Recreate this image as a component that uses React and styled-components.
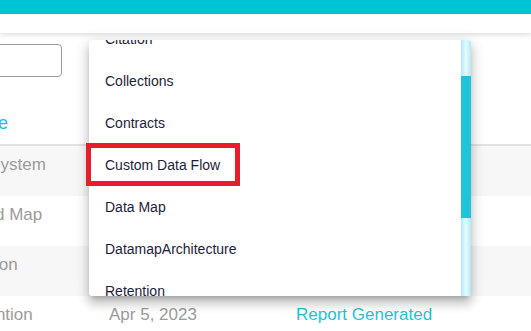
import React from "react";
import styled, { createGlobalStyle } from "styled-components";

const GlobalStyle = createGlobalStyle`
  html, body {
    margin: 0;
    padding: 0;
    background: #ffffff;
    overflow: hidden;
  }
  body {
    font-family: "Liberation Sans", Arial, sans-serif;
  }
`;

const menuItems = [
  "Citation",
  "Collections",
  "Contracts",
  "Custom Data Flow",
  "Data Map",
  "DatamapArchitecture",
  "Retention",
  "Vendors",
];

const rows = [
  { name: "HR System", date: "", status: "" },
  { name: "Cloud Map", date: "", status: "" },
  { name: "Citation", date: "", status: "" },
  { name: "Retention", date: "Apr 5, 2023", status: "Report Generated" },
];

export default function App() {
  return (
    <Page>
      <GlobalStyle />
      <TopBar />
      <Header />
      <Content>
        <Toolbar>
          <SearchInput />
        </Toolbar>
        <HeadRow>
          <HeadCell>Name</HeadCell>
          <HeadCell />
          <HeadCell />
        </HeadRow>
        {rows.map((r, i) => (
          <Row key={i} $striped={i % 2 === 0}>
            <Cell>{r.name}</Cell>
            <Cell>{r.date}</Cell>
            <Cell $link>{r.status}</Cell>
          </Row>
        ))}
      </Content>

      <Menu>
        <MenuList>
          {menuItems.map((m) => (
            <MenuItem key={m}>{m}</MenuItem>
          ))}
        </MenuList>
        <ScrollTrack>
          <ScrollThumb />
        </ScrollTrack>
      </Menu>

      <Highlight />
    </Page>
  );
}

const Page = styled.div`
  position: relative;
  width: 531px;
  height: 331px;
  overflow: hidden;
  background: #ffffff;
`;

const TopBar = styled.div`
  height: 14px;
  background-color: #00c4d6;
`;

const Header = styled.div`
  position: relative;
  z-index: 1;
  height: 19px;
  background-color: #ffffff;
  box-shadow: 0 2px 5px rgba(0, 0, 0, 0.13);
`;

const Content = styled.div`
  margin-left: -40px;
  width: 571px;
`;

const Toolbar = styled.div`
  display: flex;
  align-items: center;
  padding-top: 11px;
`;

const SearchInput = styled.div`
  width: 100px;
  height: 31px;
  border: 1px solid #9a9a9a;
  border-radius: 4px;
`;

const HeadRow = styled.div`
  display: grid;
  grid-template-columns: 149px 187px 1fr;
  align-items: end;
  height: 69px;
  box-sizing: border-box;
  padding-bottom: 10px;
  border-bottom: 2px solid #e2e2e2;
`;

const HeadCell = styled.div`
  font-size: 18px;
  line-height: 21px;
  color: #1ec2d8;
`;

const Row = styled.div`
  display: grid;
  grid-template-columns: 149px 187px 1fr;
  height: 50px;
  box-sizing: border-box;
  padding-top: 9px;
  background-color: ${(p) => (p.$striped ? "#f7f7f7" : "#ffffff")};
`;

const Cell = styled.div`
  font-size: 17px;
  line-height: 20px;
  color: ${(p) => (p.$link ? "#1ec2d8" : "#9b9b9b")};
  white-space: nowrap;
`;

const Menu = styled.div`
  position: absolute;
  left: 89px;
  top: 40px;
  width: 382px;
  height: 256px;
  display: flex;
  background-color: #ffffff;
  border-radius: 3px;
  overflow: hidden;
  z-index: 2;
  box-shadow: 0px 5px 5px -3px rgba(0, 0, 0, 0.2),
    0px 8px 10px 1px rgba(0, 0, 0, 0.14), 0px 3px 14px 2px rgba(0, 0, 0, 0.12);
`;

const MenuList = styled.div`
  flex: 1;
  margin-top: -22px;
`;

const MenuItem = styled.div`
  height: 42px;
  line-height: 42px;
  padding-left: 16px;
  font-size: 14px;
  color: #1d1d3a;
  white-space: nowrap;
`;

const ScrollTrack = styled.div`
  width: 10px;
  height: 100%;
  box-sizing: border-box;
  padding-top: 36px;
  background: linear-gradient(to right, #aeebf3, #e8fbfd 50%, #aeebf3);
`;

const ScrollThumb = styled.div`
  height: 142px;
  background-color: #1ec4d9;
`;

const Highlight = styled.div`
  position: absolute;
  left: 86px;
  top: 143px;
  width: 154px;
  height: 43px;
  box-sizing: border-box;
  border: 5px solid #ea1c2b;
  z-index: 3;
`;
